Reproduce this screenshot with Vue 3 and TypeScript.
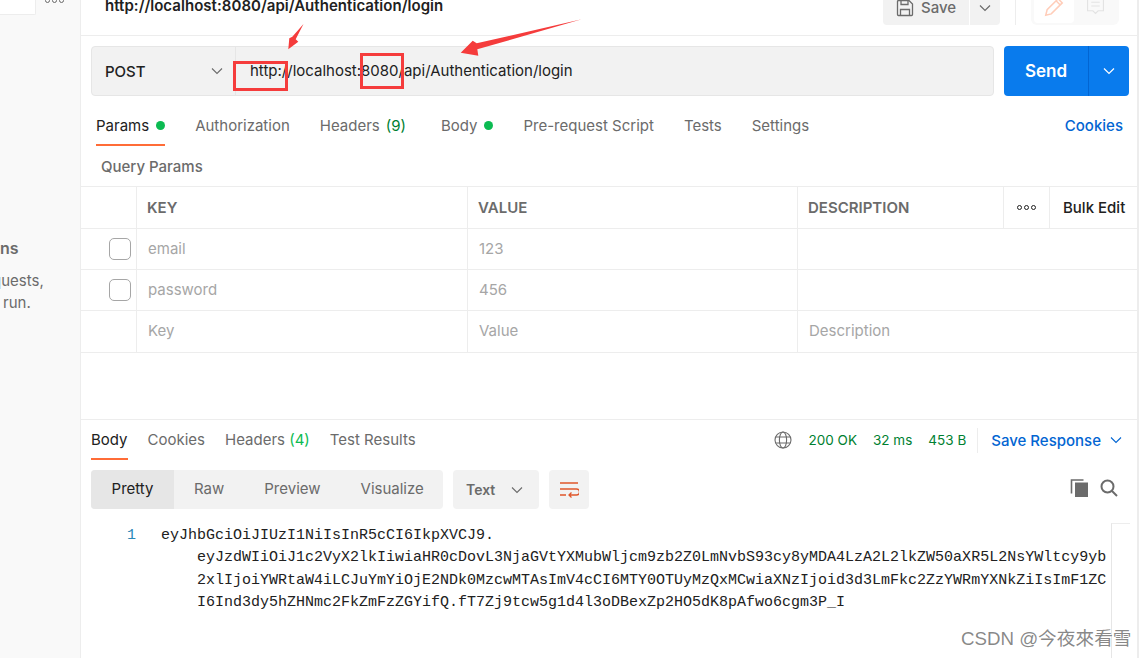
<script setup lang="ts">
interface Param { key: string; value: string; hasBox: boolean; placeholder?: boolean }
const requestTabs = [
  { label: 'Params', dot: true, active: true },
  { label: 'Authorization' },
  { label: 'Headers', count: '(9)', wide: true },
  { label: 'Body', dot: true },
  { label: 'Pre-request Script' },
  { label: 'Tests' },
  { label: 'Settings' },
]
const params: Param[] = [
  { key: 'email', value: '123', hasBox: true },
  { key: 'password', value: '456', hasBox: true },
  { key: 'Key', value: 'Value', hasBox: false, placeholder: true },
]
const codeLines = [
  'eyJzdWIiOiJ1c2VyX2lkIiwiaHR0cDovL3NjaGVtYXMubWljcm9zb2Z0LmNvbS93cy8yMDA4LzA2L2lkZW50aXR5L2NsYWltcy9yb',
  '2xlIjoiYWRtaW4iLCJuYmYiOjE2NDk0MzcwMTAsImV4cCI6MTY0OTUyMzQxMCwiaXNzIjoid3d3LmFkc2ZzYWRmYXNkZiIsImF1ZC',
  'I6Ind3dy5hZHNmc2FkZmFzZGYifQ.fT7Zj9tcw5g1d4l3oDBexZp2HO5dK8pAfwo6cgm3P_I',
]
</script>

<template>
  <div class="page">
    <aside class="sidebar">
      <div class="side-top">
        <div class="side-box"></div>
        <div class="side-dots"><i></i><i></i><i></i></div>
      </div>
      <div class="side-title">ns</div>
      <div class="side-text first">quests,</div>
      <div class="side-text second">run.</div>
    </aside>

    <main class="main">
      <header class="topbar">
        <div class="title">http://localhost:8080/api/Authentication/login</div>
        <div class="top-actions">
          <div class="save-btn">
            <svg class="save-icon" viewBox="0 0 18 18" fill="none" stroke="#6b6b6b" stroke-width="1.3">
              <path d="M1.500 2.500a1 1 0 0 1 1-1h10.500l3.500 3.500v10.500a1 1 0 0 1-1 1h-13a1 1 0 0 1-1-1z" />
              <path d="M4.500 16.500v-6h9v6M5 1.500v4h7v-4" />
            </svg>
            <span>Save</span>
          </div>
          <div class="save-more">
            <svg class="chev" viewBox="0 0 12 12" fill="none" stroke="#6b6b6b" stroke-width="1.2"><path d="M1 3.500l5 5 5-5" /></svg>
          </div>
          <div class="top-sep"></div>
          <div class="mode-group">
            <div class="mode-on">
              <svg viewBox="0 0 16 16" width="22" height="22" fill="none" stroke="#ffcdb9" stroke-width="1.100"><path d="M2 14l1-4 8-8 3 3-8 8zM9.500 3.500l3 3" /></svg>
            </div>
            <div class="mode-off">
              <svg viewBox="0 0 18 18" width="19" height="19" fill="none" stroke="#e3e3e3" stroke-width="1.100"><path d="M1.500 1h15v12h-5l-2.500 2.500-2.500-2.500h-5zM5 5h8M5 8.500h8" /></svg>
            </div>
          </div>
        </div>
      </header>

      <section class="url-row">
        <div class="url-bar">
          <div class="method">
            <span>POST</span>
            <svg class="chev" viewBox="0 0 12 12" fill="none" stroke="#6b6b6b" stroke-width="1.100"><path d="M1 3.500l5 5 5-5" /></svg>
          </div>
          <div class="url-text">http://localhost:8080/api/Authentication/login</div>
        </div>
        <div class="send">
          <div class="send-main">Send</div>
          <div class="send-more">
            <svg class="chev" viewBox="0 0 12 12" fill="none" stroke="#fff" stroke-width="1.200"><path d="M1 3.500l5 5 5-5" /></svg>
          </div>
        </div>
      </section>

      <section class="request">
        <nav class="req-tabs">
          <div v-for="t in requestTabs" :key="t.label" class="req-tab" :class="{ active: t.active, wide: t.wide }">
            <span>{{ t.label }}</span>
            <span v-if="t.count" class="count">{{ t.count }}</span>
            <i v-if="t.dot" class="dot"></i>
          </div>
          <div class="cookies">Cookies</div>
        </nav>
        <div class="query-title">Query Params</div>

        <div class="table">
          <div class="tr head">
            <div class="td check"></div>
            <div class="td c-key">KEY</div>
            <div class="td c-val">VALUE</div>
            <div class="td c-desc">DESCRIPTION</div>
            <div class="td c-dots"><i></i><i></i><i></i></div>
            <div class="td c-bulk">Bulk Edit</div>
          </div>
          <div v-for="p in params" :key="p.key" class="tr body-row">
            <div class="td check"><span v-if="p.hasBox" class="box"></span></div>
            <div class="td c-key">{{ p.key }}</div>
            <div class="td c-val">{{ p.value }}</div>
            <div class="td c-wide">{{ p.placeholder ? 'Description' : '' }}</div>
          </div>
        </div>
      </section>

      <section class="response">
        <div class="res-head">
          <nav class="res-tabs">
            <div class="res-tab active">Body</div>
            <div class="res-tab">Cookies</div>
            <div class="res-tab">Headers <span class="count green">(4)</span></div>
            <div class="res-tab">Test Results</div>
          </nav>
          <div class="res-meta">
            <svg class="globe" viewBox="0 0 18 18" fill="none" stroke="#6b6b6b" stroke-width="1.100">
              <circle cx="9" cy="9" r="8" />
              <ellipse cx="9" cy="9" rx="3.600" ry="8" />
              <path d="M1.800 6h14.400M1.800 12h14.400" />
            </svg>
            <span class="stat s1">200 OK</span>
            <span class="stat s2">32 ms</span>
            <span class="stat s3">453 B</span>
            <span class="meta-sep"></span>
            <span class="save-res">Save Response</span>
            <svg class="chev blue" viewBox="0 0 12 12" fill="none" stroke="#0265d2" stroke-width="1.100"><path d="M1 3.500l5 5 5-5" /></svg>
          </div>
        </div>

        <div class="toolbar">
          <div class="seg">
            <div class="seg-item on">Pretty</div>
            <div class="seg-item raw">Raw</div>
            <div class="seg-item prev">Preview</div>
            <div class="seg-item vis">Visualize</div>
          </div>
          <div class="fmt">
            <span>Text</span>
            <svg class="chev" viewBox="0 0 12 12" fill="none" stroke="#6b6b6b" stroke-width="1.100"><path d="M1 3.500l5 5 5-5" /></svg>
          </div>
          <div class="wrap-btn">
            <svg viewBox="0 0 20 18" width="20" height="18" fill="none" stroke="#e0572b" stroke-width="1.300">
              <path d="M1 2h18M1 8h16.500a2.800 2.800 0 0 1 0 6H10M12.500 11.500L10 14l2.500 2.500M1 14h6" />
            </svg>
          </div>
          <div class="tool-right">
            <svg class="copy" viewBox="0 0 18 18" fill="#6b6b6b">
              <path d="M5 3.500h13V18H5z" />
              <path d="M1.500 14.500V1h12" fill="none" stroke="#6b6b6b" stroke-width="1.600" />
            </svg>
            <svg class="search" viewBox="0 0 18 18" fill="none" stroke="#6b6b6b" stroke-width="2">
              <circle cx="7.500" cy="7.500" r="6" />
              <path d="M12 12l5 5" />
            </svg>
          </div>
        </div>

        <div class="code">
          <div class="ln">1</div>
          <div class="code-body">
            <div class="code-line">eyJhbGciOiJIUzI1NiIsInR5cCI6IkpXVCJ9.</div>
            <div v-for="l in codeLines" :key="l" class="code-line cont">{{ l }}</div>
          </div>
          <div class="scroll-box"></div>
        </div>
      </section>
    </main>

    <svg class="annot" viewBox="0 0 1147 658" width="1147" height="658">
      <rect x="234.500" y="62.500" width="52" height="27" fill="none" stroke="#f53c3c" stroke-width="3" />
      <rect x="361.500" y="54.500" width="41" height="33" fill="none" stroke="#f53c3c" stroke-width="3" />
      <path d="M303.500 24L292.300 36.700 289.300 38.300 288.300 49.300 298.300 41.700 295.700 39.300z" fill="#f53c3c" />
      <path d="M581.700 19.300L476.700 43.300 472.700 40.700 460.700 52.700 478.300 55.700 477.300 49.300z" fill="#f53c3c" />
    </svg>
    <div class="watermark">CSDN @今夜來看雪</div>
  </div>
</template>

<style>
html, body { margin: 0; background: #fff; }
</style>

<style scoped>
.page {
  position: relative;
  display: flex;
  width: 1147px;
  height: 658px;
  overflow: hidden;
  background: #fff;
  color: #212121;
  font-family: Inter, "Noto Sans", sans-serif;
  font-size: 15px;
}
.sidebar {
  width: 80px;
  flex: none;
  overflow: hidden;
  background: #f9f9f9;
  border-right: 1px solid #ededed;
  color: #6b6b6b;
}
.side-top { display: flex; height: 15px; align-items: flex-start; }
.side-box {
  width: 35px; height: 14px; background: #fff;
  border: 1px solid #ededed; border-top: 0; border-left: 0; border-radius: 0 0 2px 0;
}
.side-dots { display: flex; gap: 2px; margin: -2px 0 0 9px; }
.side-dots i { width: 5px; height: 5px; border: 1px solid #6b6b6b; border-radius: 50%; box-sizing: border-box; }
.side-title { margin-top: 224px; height: 18px; line-height: 18px; font-size: 16px; font-weight: 600; }
.side-text { font-size: 15px; line-height: 22px; white-space: nowrap; }
.side-text.first { margin-top: 13px; margin-left: -8px; }
.side-text.second { margin-left: 3px; }

.main {
  width: 1056px;
  flex: none;
  border-right: 2px solid #ededed;
  display: flex;
  flex-direction: column;
  overflow: hidden;
}
.topbar {
  height: 35px;
  flex: none;
  display: flex;
  justify-content: space-between;
  align-items: flex-end;
  border-bottom: 1px solid #ededed;
  overflow: hidden;
}
.title {
  margin: 0 0 20px 24px;
  font-size: 15px;
  font-weight: 600;
  letter-spacing: 0.05px;
  line-height: 18px;
  white-space: nowrap;
}
.top-actions { display: flex; margin: -10px 18px 10px 0; height: 35px; }
.save-btn {
  width: 86px; display: flex; align-items: center; justify-content: center; gap: 7px;
  background: #f2f2f2; border-radius: 4px 0 0 4px; color: #6b6b6b; font-weight: 500; font-size: 15px;
}
.save-icon { width: 18px; height: 18px; }
.save-more {
  width: 30px; margin-left: 1px; display: flex; align-items: center; justify-content: center;
  background: #f2f2f2; border-radius: 0 4px 4px 0;
}
.top-sep { width: 1px; background: #ededed; margin: 0 15px; }
.mode-group { width: 88px; background: #f9f9f9; border-radius: 0 0 6px 6px; display: flex; padding: 0 3px 2px; box-sizing: border-box; }
.mode-on { width: 40px; background: #fff; border-radius: 0 0 4px 4px; display: flex; align-items: center; justify-content: center; }
.mode-off { flex: 1; display: flex; align-items: center; justify-content: center; }
.chev { width: 12px; height: 12px; flex: none; }

.url-row {
  flex: none;
  display: flex;
  gap: 10px;
  height: 50px;
  margin-top: 10px;
  padding: 0 8px 0 10px;
}
.url-bar {
  width: 903px;
  box-sizing: border-box;
  display: flex;
  background: #f2f2f2;
  border: 1px solid #e6e6e6;
  border-radius: 4px;
}
.method {
  width: 144px; flex: none; box-sizing: border-box; display: flex; align-items: center;
  justify-content: space-between; padding: 0 12px 0 13px; border-right: 1px solid #e6e6e6;
  font-weight: 500;
}
.url-text { padding-left: 14px; line-height: 47px; white-space: nowrap; }
.send { width: 125px; display: flex; background: #097bed; border-radius: 4px; color: #fff; }
.send-main { width: 84px; text-align: center; line-height: 50px; font-size: 17px; font-weight: 600; border-right: 1px solid #0265d2; }
.send-more { flex: 1; display: flex; align-items: center; justify-content: center; }

.request {
  height: 324px;
  flex: none;
  border-bottom: 1px solid #ededed;
  padding-top: 10px;
  box-sizing: border-box;
}
.req-tabs { display: flex; height: 40px; padding: 0 14px 0 15px; }
.req-tab {
  display: flex; align-items: center; gap: 6px; margin-right: 30px; color: #6b6b6b;
  height: 40px; box-sizing: border-box; white-space: nowrap; border-bottom: 2px solid transparent;
}
.req-tab.wide { margin-right: 35px; }
.req-tab.active { color: #212121; border-bottom-color: #ff6c37; }
.dot { width: 9px; height: 9px; border-radius: 50%; background: #0cbb52; margin-left: 1px; }
.count { color: #007f31; }
.cookies { margin-left: auto; align-self: center; color: #0265d2; font-weight: 500; padding-bottom: 2px; }
.query-title { height: 40px; line-height: 42px; padding-left: 20px; color: #6b6b6b; font-weight: 500; }
.table { border-top: 1px solid #ededed; }
.tr { display: flex; border-bottom: 1px solid #ededed; box-sizing: border-box; height: 41px; }
.tr.head { height: 42px; color: #6b6b6b; font-weight: 600; }
.tr.body-row { color: #a6a6a6; }
.tr.body-row:last-child { height: 42px; }
.tr.body-row:last-child .td { padding-bottom: 3px; }
.td { display: flex; align-items: center; box-sizing: border-box; height: 100%; border-left: 1px solid #ededed; padding-left: 10px; padding-bottom: 1px; }
.tr.body-row .td:not(.check) { padding-left: 11px; }
.td.check { width: 55px; border-left: 0; padding-left: 28px; }
.c-key { width: 331px; }
.c-val { width: 330px; }
.c-desc { width: 206px; }
.c-wide { flex: 1; }
.c-dots { width: 46px; gap: 2px; padding-left: 13px; }
.c-dots i { width: 5px; height: 5px; border: 1px solid #212121; border-radius: 50%; box-sizing: border-box; }
.c-bulk { flex: 1; padding-left: 13px; color: #212121; font-weight: 500; white-space: nowrap; }
.box { width: 22px; height: 22px; box-sizing: border-box; border: 1px solid #a6a6a6; border-radius: 5px; background: #fff; }

.response { flex: 1; display: flex; flex-direction: column; min-height: 0; padding: 0 8px 0 10px; }
.res-head { display: flex; justify-content: space-between; height: 40px; flex: none; }
.res-tabs { display: flex; gap: 20px; }
.res-tab { height: 40px; box-sizing: border-box; line-height: 40px; color: #6b6b6b; white-space: nowrap; }
.res-tab.active { color: #212121; border-bottom: 2px solid #ff6c37; }
.count.green { color: #0cbb52; }
.res-meta { display: flex; align-items: center; height: 40px; padding-right: 7px; font-size: 13.500px; }
.globe { width: 18px; height: 18px; margin-right: 17px; }
.stat { color: #007f31; white-space: nowrap; }
.s1 { margin-right: 16px; }
.s2 { margin-right: 16px; }
.meta-sep { width: 1px; height: 25px; background: #ededed; margin: 0 13px 0 11px; }
.save-res { color: #0265d2; font-weight: 500; font-size: 15px; white-space: nowrap; margin-right: 9px; }
.toolbar { display: flex; height: 39px; margin-top: 10px; flex: none; }
.seg { width: 352px; display: flex; background: #f2f2f2; border-radius: 4px; color: #6b6b6b; overflow: hidden; }
.seg-item { line-height: 37px; white-space: nowrap; }
.seg-item.on { width: 83px; text-align: center; background: #e6e6e6; color: #212121; }
.raw { margin-left: 20px; }
.prev { margin-left: 40px; }
.vis { margin-left: 40px; }
.fmt {
  width: 86px; margin-left: 10px; box-sizing: border-box; padding: 0 16px 0 13px; display: flex; align-items: center;
  justify-content: space-between; background: #f2f2f2; border-radius: 4px; color: #6b6b6b; font-weight: 600; font-size: 14px;
}
.wrap-btn { width: 40px; margin-left: 10px; display: flex; align-items: center; justify-content: center; background: #f2f2f2; border-radius: 4px; }
.tool-right { margin-left: auto; display: flex; align-items: center; gap: 12px; padding: 0 11px 3px 0; }
.copy, .search { width: 18px; height: 18px; }
.code { position: relative; flex: 1; display: flex; margin-top: 16px; font-family: "Liberation Mono", monospace; font-size: 15px; line-height: 22.300px; }
.ln { width: 70px; flex: none; box-sizing: border-box; padding-left: 36px; color: #2a88b8; }
.code-line { white-space: pre; }
.code-line.cont { padding-left: 36px; }
.scroll-box {
  position: absolute; left: 1020px; top: -2px; bottom: 0; width: 18px;
  border-left: 1px solid #e6e6e6; border-top: 1px solid #ededed;
}
.annot { position: absolute; left: 0; top: 0; pointer-events: none; }
.watermark {
  position: absolute; left: 961px; top: 626px; color: rgba(90, 90, 90, 0.72);
  font-family: "Liberation Sans", "Noto Sans CJK SC", sans-serif; font-size: 18.700px; line-height: 26px; white-space: nowrap;
}
</style>
